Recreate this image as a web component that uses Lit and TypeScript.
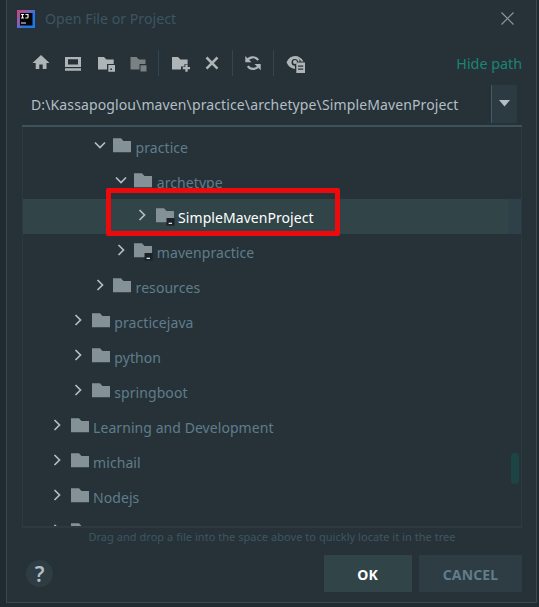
import { LitElement, html, css, svg } from "lit";
import { customElement } from "lit/decorators.js";
import { classMap } from "lit/directives/class-map.js";
import { styleMap } from "lit/directives/style-map.js";

interface TreeNode {
  name: string;
  depth: number;
  open?: boolean;
  module?: boolean;
  selected?: boolean;
}

const NODES: TreeNode[] = [
  { name: "practice", depth: 2, open: true },
  { name: "archetype", depth: 3, open: true },
  { name: "SimpleMavenProject", depth: 4, module: true, selected: true },
  { name: "mavenpractice", depth: 3, module: true },
  { name: "resources", depth: 2 },
  { name: "practicejava", depth: 1 },
  { name: "python", depth: 1 },
  { name: "springboot", depth: 1 },
  { name: "Learning and Development", depth: 0 },
  { name: "michail", depth: 0 },
  { name: "Nodejs", depth: 0 },
  { name: "", depth: 0 },
];

@customElement("app-root")
export class AppRoot extends LitElement {
  static styles = css`
    :host {
      display: block;
      width: 539px;
      height: 607px;
      box-sizing: border-box;
      overflow: hidden;
      background: #202b31;
      padding: 0 2px 4px 6px;
      font: 14px/20px "Noto Sans", sans-serif;
      color: #607d8b;
      white-space: nowrap;
    }
    svg { display: block; flex: none; }
    .dialog {
      box-sizing: border-box;
      height: 603px;
      border: 1px solid #3d474d;
      border-top: 0;
      background: #263238;
      padding: 0 14px 0 15px;
      display: flex;
      flex-direction: column;
    }
    .title { height: 37px; display: flex; align-items: center; color: #3d5561; }
    .title .logo { margin: 0 10px 0 -5px; }
    .title span { flex: 1; font-size: 14.2px; }
    .title .close { margin-right: 8px; }
    .tools { height: 48px; display: flex; align-items: center; padding-top: 4px; box-sizing: border-box; }
    .tools .strip { flex: 1; height: 30px; }
    .link { color: #1a8577; font-size: 14.3px; padding-top: 1px; }
    .path {
      height: 42px;
      box-sizing: border-box;
      border-bottom: 2px solid #3e525c;
      display: flex;
      align-items: center;
      color: #b3bfc5;
      padding: 0 5px 3px 9px;
    }
    .path span { flex: 1; letter-spacing: 0.12px; padding-top: 2px; }
    .drop {
      width: 26px;
      height: 38px;
      box-sizing: border-box;
      border-left: 1px solid #465a64;
      background: #2c3a41;
      display: flex;
      align-items: center;
      justify-content: center;
    }
    .tree {
      position: relative;
      height: 401px;
      box-sizing: border-box;
      border: 1px solid #2c3940;
      border-top: 0;
      border-bottom-width: 2px;
      overflow: hidden;
      padding-top: 2px;
    }
    .row { height: 35px; display: flex; align-items: flex-start; box-sizing: border-box; }
    .row .chev { margin: 10px 7.5px 0 0; }
    .row .folder { margin: 9px 3.6px 0 0; }
    .row span { margin-top: 9px; letter-spacing: 0.06px; }
    .selected { background: linear-gradient(to left, #2e4148 13px, #314549 13px); color: #fff; }
    .thumb {
      position: absolute;
      right: 2px;
      top: 326px;
      width: 8px;
      height: 31px;
      border-radius: 4px;
      background: #1d4444;
    }
    .hint {
      height: 20px;
      line-height: 18px;
      text-align: center;
      font-size: 11px;
      color: #3f5662;
      letter-spacing: 0.04px;
    }
    .foot { display: flex; align-items: center; height: 37px; margin-top: 7px; gap: 7px; font-weight: 700; }
    .help {
      width: 27px;
      height: 27px;
      border-radius: 50%;
      background: #2e3c43;
      display: flex;
      align-items: center;
      justify-content: center;
      margin: 0 auto 0 4px;
      font-size: 21px;
      font-weight: 600;
      color: #b4bec2;
    }
    .btn {
      width: 103px;
      height: 37px;
      line-height: 39px;
      text-align: center;
      background: #2e3c43;
      letter-spacing: 0.15px;
    }
    .ok { width: 88px; box-sizing: border-box; padding-right: 1px; background: #314549; color: #fff; }
    .mark {
      position: absolute;
      left: 105.5px;
      top: 188px;
      width: 234px;
      height: 48px;
      box-sizing: border-box;
      border: 5px solid #ec0a0c;
      border-radius: 2px;
    }
  `;

  private row(n: TreeNode) {
    return html`<div
      class=${classMap({ row: true, selected: !!n.selected })}
      style=${styleMap({ paddingLeft: `${28 + n.depth * 21.25}px` })}
    >
      <svg class="chev" width="12" height="12" viewBox="0 0 12 12" fill="none" stroke="#b3bdc2" stroke-width="1.7">
        <path d=${n.open ? "M1 3.5 6 8.5 11 3.5" : "M3.5 1 8.5 6 3.5 11"} />
      </svg>
      <svg class="folder" width="19" height="18" viewBox="0 0 19 18">
        <path fill="#849197" d="M0 .3H8L10.5 3H18V14.2H0Z" />
        ${n.module
          ? svg`<path fill="#1c2326" d="M10.5 10H18.6V17.7H10.5Z"/><path fill="#dce1e3" d="M12.6 14.7H16V16H12.6Z"/>`
          : ""}
      </svg>
      <span>${n.name}</span>
    </div>`;
  }

  render() {
    return html`
      <div class="dialog">
        <div class="title">
          <svg class="logo" width="18" height="18" viewBox="0 0 18 18">
            <defs>
              <linearGradient id="g" x1="0" y1="0" x2="1" y2=".8">
                <stop offset="0" stop-color="#c9457c" />
                <stop offset=".4" stop-color="#8a5fae" />
                <stop offset=".7" stop-color="#1f78e6" />
              </linearGradient>
            </defs>
            <rect width="18" height="18" fill="url(#g)" />
            <rect x="3" y="3" width="12.5" height="12.5" fill="#050506" />
            <path d="M4 4.5H7M5.5 4.5V8M4 8H7M8.5 4.5H11V7.2Q11 8 10 8H8.3M4 13H9" fill="none" stroke="#f2f2f2" stroke-width="1.2" />
          </svg>
          <span>Open File or Project</span>
          <svg class="close" width="13" height="13" viewBox="0 0 13 13" stroke="#8d989d" stroke-width="1.2">
            <path d="M.5.5 12.5 12.5M12.5.5.5 12.5" />
          </svg>
        </div>
        <div class="tools">
          <svg class="strip" viewBox="22 48 434 30" preserveAspectRatio="xMinYMid meet" fill="#afb4b6">
            <path d="M41 55 49.5 63H46.5V69H42.7V64.5H39.3V69H35.7V63H32.5Z" />
            <path fill-rule="evenodd" d="M65 57H81V67H65ZM68 59.3V64.5H78V59.3ZM65 68.2H81V70.8H65Z" />
            <path d="M98 57H104L106.5 59.5H113.7V64H107V69.5H98Z" />
            <path fill-rule="evenodd" d="M108.3 65H115V71.8H108.3ZM110.3 68.5V70H112V68.5Z" />
            <path fill="#7b8082" d="M130.5 57H136.5L139 59.5H145.5V64H139.5V69.5H130.5ZM140.5 65.3H146.5V71.5H140.5Z" />
            <path d="M158.5 50V76M232.5 50V76M273.5 50V76" stroke="#33464f" />
            <path d="M172 57H178L180.5 59.5H187.6V64H184.5V66.5H181V69.5H172Z" />
            <path d="M186.5 64.5V71.8M182.8 68.2H190" fill="none" stroke="#afb4b6" stroke-width="2.3" />
            <path d="M206.5 57.5 217.5 68.7M217.5 57.5 206.5 68.7" fill="none" stroke="#afb4b6" stroke-width="2.5" />
            <path d="M246.8 61.5A6.5 6.5 0 0 1 258.2 60M259.2 64.7A6.5 6.5 0 0 1 247.8 66.2" fill="none" stroke="#afb4b6" stroke-width="2.2" />
            <path d="M245.3 56V62.2H251.5ZM260.7 70.2V64H254.5Z" />
            <path fill-rule="evenodd" d="M286.5 62.3Q289.5 56 295 56T303.5 61.5H301Q300 58 295 58 291 58.5 291 62.5 291 66.8 295 67V69Q289 68.5 286.5 62.3Z" />
            <path d="M299 61.5A4.2 4.2 0 1 0 294.8 66.5" fill="none" stroke="#afb4b6" stroke-width="1.6" />
            <circle cx="295" cy="62" r="2" />
            <path fill-rule="evenodd" d="M296.3 62.5H305V73H296.3ZM298 65.5V66.8H303.2V65.5ZM298 68.5V69.8H303.2V68.5Z" />
          </svg>
          <span class="link">Hide path</span>
        </div>
        <div class="path">
          <span>D:\\Kassapoglou\\maven\\practice\\archetype\\SimpleMavenProject</span>
          <div class="drop">
            <svg width="11" height="7" viewBox="0 0 11 7"><path d="M0 0H11L5.5 6.5Z" fill="#b3bfc5" /></svg>
          </div>
        </div>
        <div class="tree">
          ${NODES.map((n) => this.row(n))}
          <div class="thumb"></div>
        </div>
        <div class="hint">Drag and drop a file into the space above to quickly locate it in the tree</div>
        <div class="foot">
          <div class="help">?</div>
          <div class="btn ok">OK</div>
          <div class="btn">CANCEL</div>
        </div>
      </div>
      <div class="mark"></div>
    `;
  }
}
